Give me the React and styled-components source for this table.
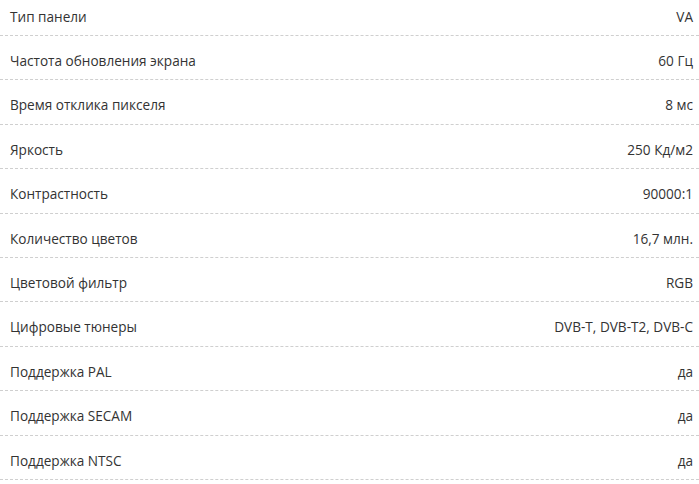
import React from "react";
import styled, { createGlobalStyle } from "styled-components";

const GlobalStyle = createGlobalStyle`
  html, body {
    margin: 0;
    padding: 0;
    background: #fff;
    overflow: hidden;
  }
`;

const specs = [
  ["Тип панели", "VA"],
  ["Частота обновления экрана", "60 Гц"],
  ["Время отклика пикселя", "8 мс"],
  ["Яркость", "250 Кд/м2"],
  ["Контрастность", "90000:1"],
  ["Количество цветов", "16,7 млн."],
  ["Цветовой фильтр", "RGB"],
  ["Цифровые тюнеры", "DVB-T, DVB-T2, DVB-C"],
  ["Поддержка PAL", "да"],
  ["Поддержка SECAM", "да"],
  ["Поддержка NTSC", "да"],
];

const SpecList = styled.div`
  width: 699px;
  margin-top: -8.4px;
  font-family: "Open Sans", "Liberation Sans", sans-serif;
  font-size: 13.6px;
  color: #333;
`;

const Row = styled.div`
  display: flex;
  justify-content: space-between;
  align-items: baseline;
  box-sizing: border-box;
  height: 44.4px;
  padding: 16px 6px 0 10px;
  line-height: 18px;
  border-bottom: 1px dashed #cfcfcf;
`;

const Name = styled.span``;

const Value = styled.span`
  text-align: right;
`;

export default function App() {
  return (
    <>
      <GlobalStyle />
      <SpecList>
        {specs.map(([name, value]) => (
          <Row key={name}>
            <Name>{name}</Name>
            <Value>{value}</Value>
          </Row>
        ))}
      </SpecList>
    </>
  );
}
